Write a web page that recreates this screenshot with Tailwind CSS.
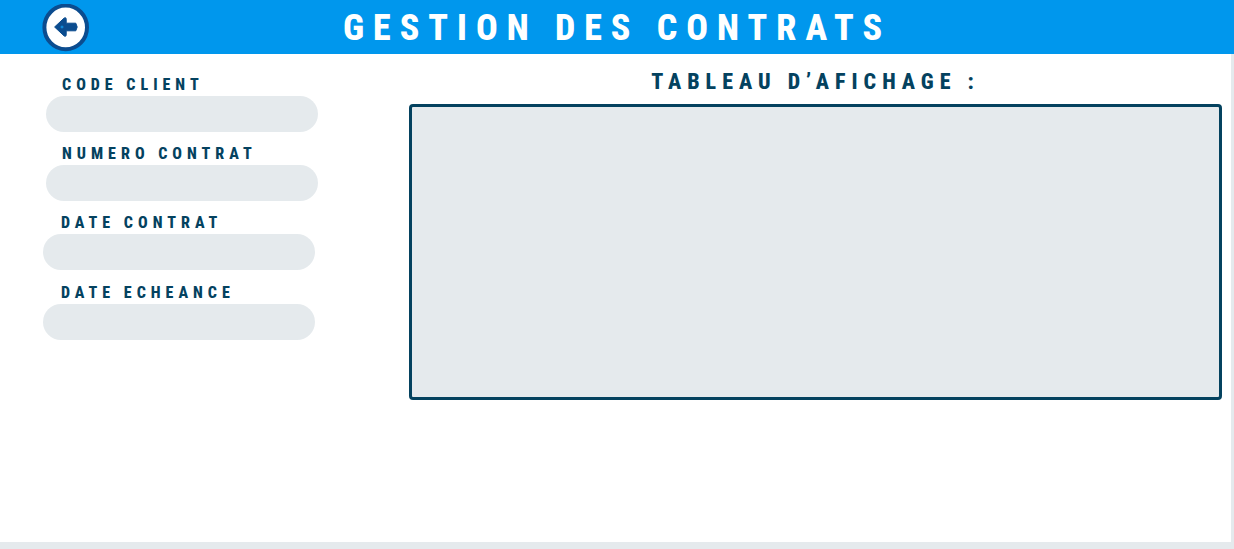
<!DOCTYPE html>
<html lang="fr">
<head>
<meta charset="utf-8">
<meta name="viewport" content="width=device-width, initial-scale=1">
<title>Gestion des contrats</title>
<script src="https://cdn.jsdelivr.net/npm/@tailwindcss/browser@4"></script>
</head>
<body class="flex min-h-screen flex-col bg-white font-['Roboto_Condensed','Liberation_Sans',sans-serif] font-extrabold text-[#04425f]">
  <header class="grid h-[54px] shrink-0 grid-cols-[90px_1fr_90px] items-center bg-[#0097ed]">
    <button type="button" aria-label="Retour" class="justify-self-end">
      <svg class="block size-12" viewBox="0 1 48 48" aria-hidden="true">
        <ellipse cx="23.7" cy="24.4" rx="21.3" ry="21.8" fill="#fff" stroke="#0b4c8f" stroke-width="4"/>
        <path d="M12.6 24 L22 15.2 Q24.4 13.6 24.2 17 V20.2 H33.8 L35.2 24 L33.8 27.8 H24.2 V31 Q24.4 34.4 22 32.8 Z" fill="#0b4c8f" stroke="#0b4c8f" stroke-linejoin="round"/>
        <path d="M20 22.2 L21.8 24 L20 25.8 L18.2 24 Z" fill="#0f88d8"/>
      </svg>
    </button>
    <h1 class="text-center text-4xl leading-[56px] tracking-[9px] text-white">GESTION DES CONTRATS</h1>
  </header>
  <main class="flex grow border-r-3 border-b-7 border-[#e5eaed] pr-[9px]">
    <form class="flex w-[409px] shrink-0 flex-col gap-[11px] pt-5 text-base leading-[22px] tracking-[5px]">
      <div class="flex flex-col gap-[11px] pl-[46px]">
        <div class="flex flex-col">
          <label for="client" class="pl-4">CODE CLIENT</label>
          <input id="client" type="text" class="h-9 w-[272px] rounded-full bg-[#e5eaed] px-4 outline-none">
        </div>
        <div class="flex flex-col">
          <label for="numero" class="pl-4">NUMERO CONTRAT</label>
          <input id="numero" type="text" class="h-9 w-[272px] rounded-full bg-[#e5eaed] px-4 outline-none">
        </div>
      </div>
      <div class="flex flex-col gap-3 pl-[43px]">
        <div class="flex flex-col">
          <label for="date" class="pl-[18px]">DATE CONTRAT</label>
          <input id="date" type="text" class="h-9 w-[272px] rounded-full bg-[#e5eaed] px-4 outline-none">
        </div>
        <div class="flex flex-col">
          <label for="echeance" class="pl-[18px]">DATE ECHEANCE</label>
          <input id="echeance" type="text" class="h-9 w-[272px] rounded-full bg-[#e5eaed] px-4 outline-none">
        </div>
      </div>
    </form>
    <section class="min-w-0 grow pt-[6px]" aria-labelledby="tableau">
      <h2 id="tableau" class="text-center text-[22px] leading-[44px] tracking-[6px]">TABLEAU D’AFICHAGE :</h2>
      <div class="h-[296px] rounded-sm border-3 border-[#04425f] bg-[#e5eaed]"></div>
    </section>
  </main>
</body>
</html>
